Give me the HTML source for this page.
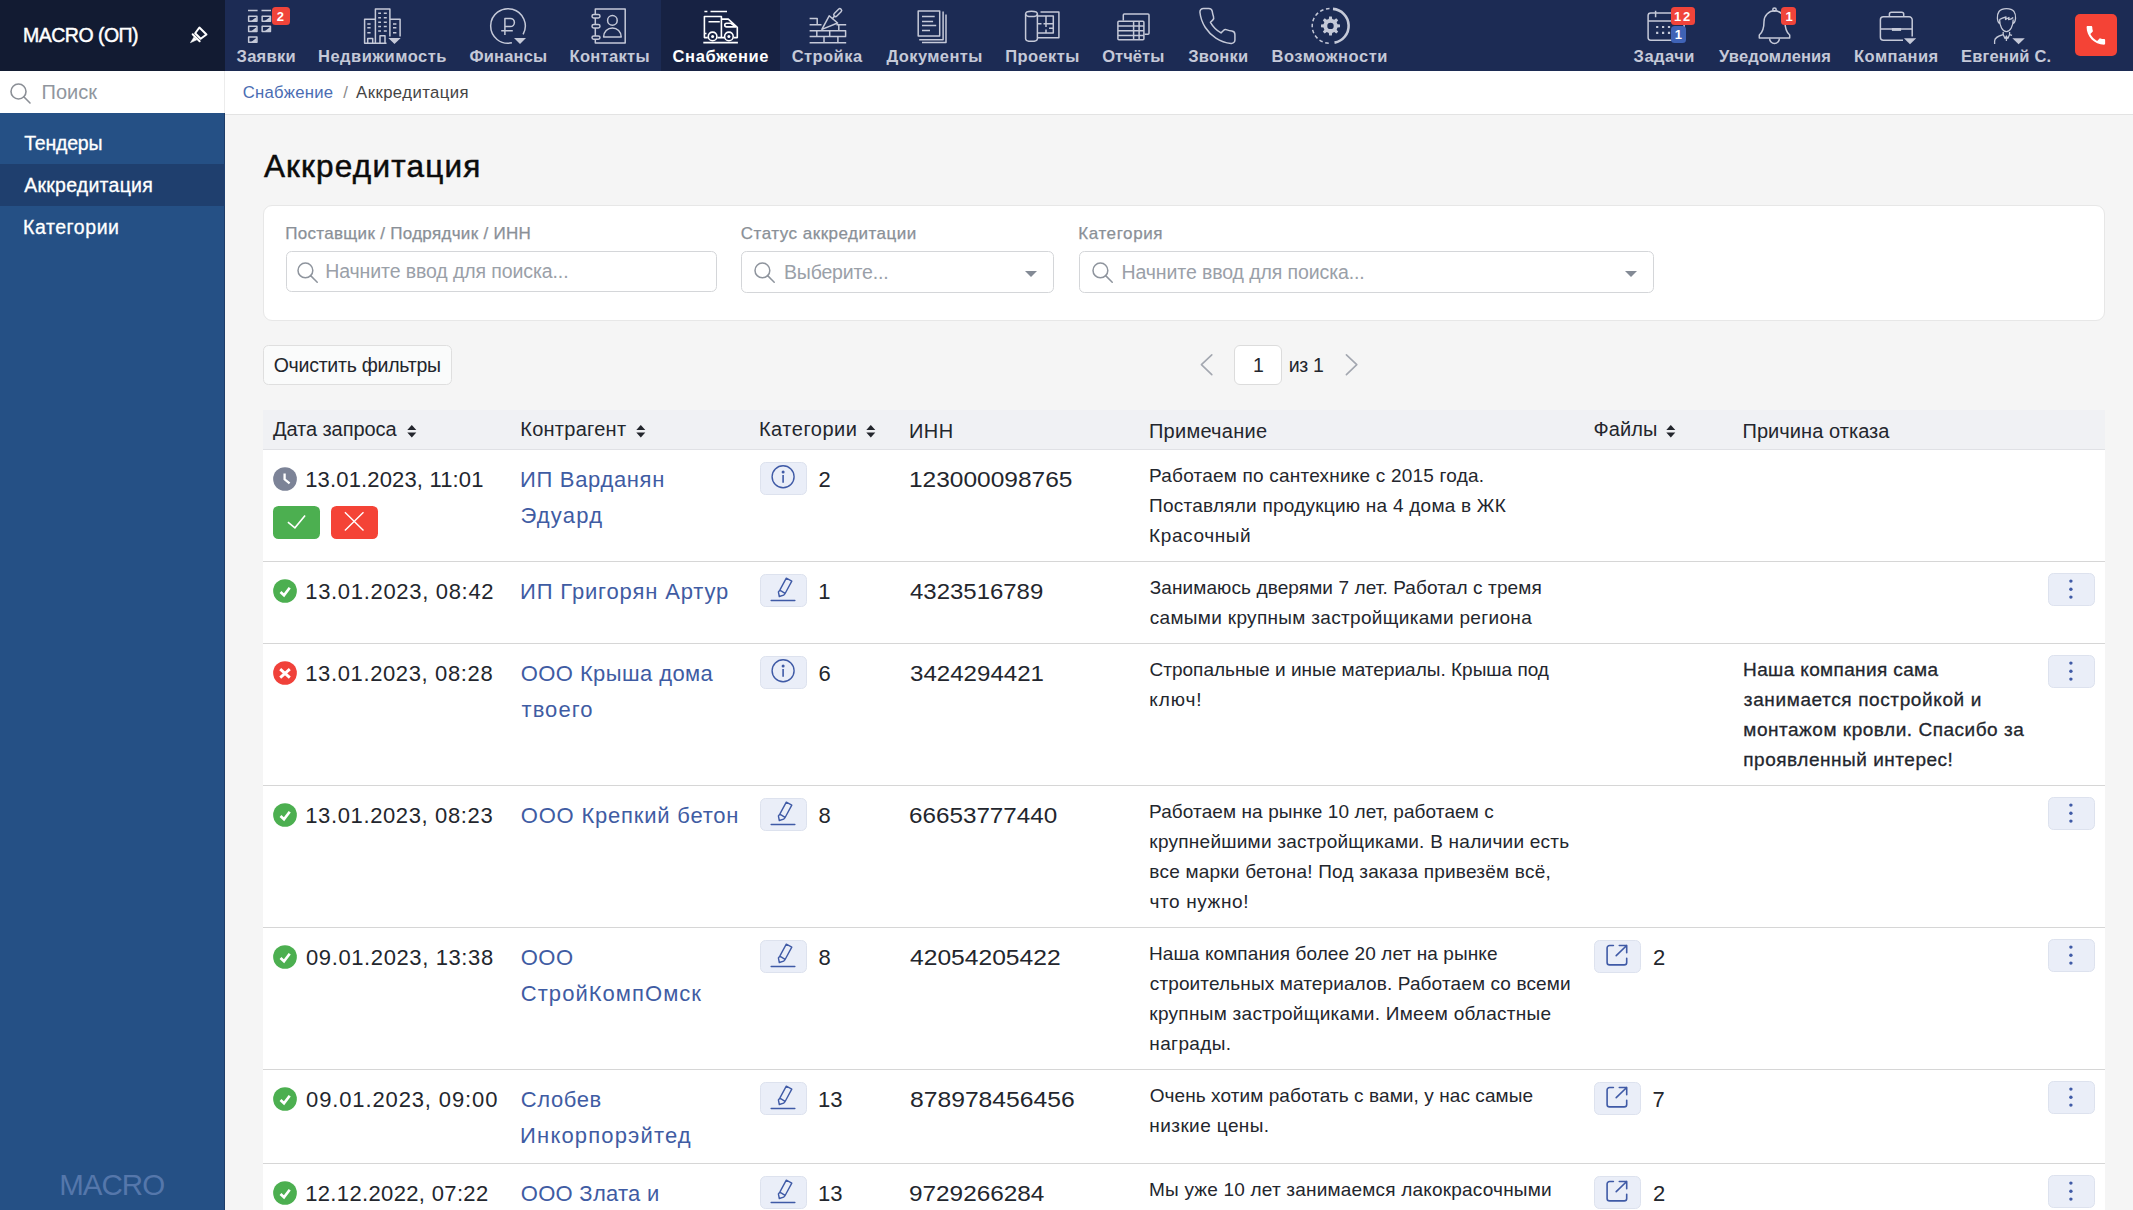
<!DOCTYPE html>
<html lang="ru">
<head>
<meta charset="utf-8">
<title>Аккредитация — Снабжение</title>
<style>
*{box-sizing:border-box;margin:0;padding:0}
html,body{width:2133px;height:1210px;overflow:hidden;background:#f5f5f5;font-family:"Liberation Sans",sans-serif;color:#23262d}
body{position:relative}
.abs{position:absolute}
.t{position:absolute;white-space:nowrap;display:block}
#top{position:absolute;left:0;top:0;width:2133px;height:70.5px;background:#1c2b54}
#brand{position:absolute;left:0;top:0;width:224.7px;height:70.5px;background:#121b32}
#navact{position:absolute;left:661px;top:0;width:119.2px;height:70.5px;background:#172243}
#callbtn{position:absolute;left:2075px;top:13.8px;width:42px;height:42.2px;border-radius:5px;background:#f44336}
.badge{position:absolute;background:#f0443a;border-radius:3.5px}
.badge.blue{background:#3f63b6}
#search{position:absolute;left:0;top:70.5px;width:224.7px;height:42.7px;background:#fff}
#crumb{position:absolute;left:223.8px;top:70.5px;width:1909.2px;height:44px;background:#fff;border-bottom:1px solid #e3e3e3;border-left:1px solid #ececec}
#side{position:absolute;left:0;top:113.2px;width:224.7px;height:1097px;background:#255085;border-right:1px solid #1d3c68}
#side .it{position:absolute;left:0;width:224.7px;height:42.2px}
#side .it.on{background:#1f3f6e}
#filters{position:absolute;left:263.3px;top:205px;width:1842px;height:115.6px;background:#fff;border:1px solid #e7e7e7;border-radius:9px}
.finput{position:absolute;background:#fff;border:1px solid #d4d6d9;border-radius:5.5px}
.car{position:absolute;right:15.8px;top:18.5px;width:0;height:0;border-left:6px solid transparent;border-right:6px solid transparent;border-top:6.2px solid #838a95}
#clear{position:absolute;left:263.3px;top:345.2px;width:188.6px;height:40.3px;border:1px solid #dfdfdf;border-radius:5.5px;background:#fafbfb}
#pagebox{position:absolute;left:1234.4px;top:345.2px;width:47.4px;height:40.3px;border:1px solid #dcdcdc;border-radius:6px;background:#fff}
#tbl{position:absolute;left:263px;top:410px;width:1842px;height:800px;background:#fff}
#thead{position:absolute;left:263px;top:410px;width:1842px;height:40px;background:#f0f1f4;border-bottom:1px solid #e0e1e5}
.rl{position:absolute;left:263px;width:1842px;height:1px;background:#d6d6d6}
.btn{position:absolute;width:46.4px;height:32.6px;background:#eaeef8;border:1px solid #dde2ee;border-radius:5.5px}
.ab{position:absolute;width:46.6px;height:33px;border-radius:5.5px;overflow:hidden}
</style>
</head>
<body>
<div id="top"><div id="brand"></div><div id="navact"></div>
<div id="callbtn"></div>
</div>
<div id="search"></div><div id="crumb"></div>
<svg class="abs" style="left:9.1px;top:82.0px" width="27" height="27"><g transform="translate(-9.1 -82.0)" fill="none" stroke="#8b8f96" stroke-width="1.6" stroke-linecap="round"><circle cx="18.6" cy="91.5" r="7.5"/><path d="M23.90 96.80L30.10 103.00"/></g></svg>
<div id="side"><div class="it on" style="top:51px"></div></div>
<div id="filters"></div>
<div class="finput" style="left:286px;top:251.2px;width:431px;height:40.8px"></div>
<div class="finput" style="left:741.3px;top:251px;width:312.7px;height:41.6px"><i class="car"></i></div>
<div class="finput" style="left:1078.5px;top:251px;width:575.5px;height:41.6px"><i class="car"></i></div>
<svg class="abs" style="left:296.4px;top:261.3px" width="27" height="27"><g transform="translate(-296.4 -261.3)" fill="none" stroke="#8e949d" stroke-width="1.5" stroke-linecap="round"><circle cx="305.8" cy="270.7" r="7.4"/><path d="M311.03 275.93L317.63 282.53"/></g></svg>
<svg class="abs" style="left:753.2px;top:260.6px" width="27" height="27"><g transform="translate(-753.2 -260.6)" fill="none" stroke="#8e949d" stroke-width="1.5" stroke-linecap="round"><circle cx="762.6" cy="270.0" r="7.4"/><path d="M767.83 275.23L774.43 281.83"/></g></svg>
<svg class="abs" style="left:1091.0px;top:260.6px" width="27" height="27"><g transform="translate(-1091.0 -260.6)" fill="none" stroke="#8e949d" stroke-width="1.5" stroke-linecap="round"><circle cx="1100.4" cy="270.0" r="7.4"/><path d="M1105.63 275.23L1112.23 281.83"/></g></svg>
<div id="clear"></div>
<div id="pagebox"></div>
<svg class="abs" style="left:1196px;top:350px" width="170" height="30"><g fill="none" stroke="#a3a7b0" stroke-width="1.6" stroke-linecap="round" stroke-linejoin="round"><path d="M15.8 4.8L5.4 14.7L15.8 24.6"/><path d="M150.4 4.8L160.8 14.7L150.4 24.6"/></g></svg>
<div id="tbl"></div><div id="thead"></div>
<div class="rl" style="top:561px"></div>
<div class="rl" style="top:643px"></div>
<div class="rl" style="top:785px"></div>
<div class="rl" style="top:927px"></div>
<div class="rl" style="top:1069px"></div>
<div class="rl" style="top:1163px"></div>
<svg class="abs" style="left:407px;top:424.5px" width="10" height="13"><path d="M0.3 5L4.8 0L9.3 5Z M0.3 7.6L4.8 12.6L9.3 7.6Z" fill="#23262d"/></svg>
<svg class="abs" style="left:636px;top:424.5px" width="10" height="13"><path d="M0.3 5L4.8 0L9.3 5Z M0.3 7.6L4.8 12.6L9.3 7.6Z" fill="#23262d"/></svg>
<svg class="abs" style="left:866px;top:424.5px" width="10" height="13"><path d="M0.3 5L4.8 0L9.3 5Z M0.3 7.6L4.8 12.6L9.3 7.6Z" fill="#23262d"/></svg>
<svg class="abs" style="left:1666px;top:424.5px" width="10" height="13"><path d="M0.3 5L4.8 0L9.3 5Z M0.3 7.6L4.8 12.6L9.3 7.6Z" fill="#23262d"/></svg>
<svg class="abs" style="left:273.1px;top:467px" width="24" height="24"><circle cx="12" cy="12" r="11.85" fill="#7c8397"/><path d="M11.6 6.6V12.3L16.6 16.4" fill="none" stroke="#fff" stroke-width="2.3"/></svg>
<div class="btn" style="left:760.3px;top:462.2px"><svg width="46" height="32" style="position:absolute;left:-1px;top:-1px;overflow:visible"><circle cx="23.1" cy="14.8" r="11" fill="none" stroke="#3f5aa6" stroke-width="1.4"/><circle cx="23.1" cy="10.1" r="1.5" fill="#3f5aa6"/><path d="M23.1 13.1V20.7" stroke="#3f5aa6" stroke-width="1.6"/></svg></div>
<svg class="abs" style="left:273.1px;top:579px" width="24" height="24"><circle cx="12" cy="12" r="11.85" fill="#4caf50"/><path d="M7.5 12.9L11 16.2L16.7 8.8" fill="none" stroke="#fff" stroke-width="2.7"/></svg>
<div class="btn" style="left:760.3px;top:574.2px"><svg width="46" height="32" style="position:absolute;left:-1px;top:-1px;overflow:visible"><path d="M26.3 4.2L31.8 7.1L25.1 19.5L23.7 21.1L19.3 22.5L18.4 17.9L19.8 16.2Z M19.8 16.2L25.1 19.3" fill="none" stroke="#3f5aa6" stroke-width="1.4" stroke-linejoin="round"/><path d="M11.2 26.5H34.8" stroke="#3f5aa6" stroke-width="1.5" stroke-linecap="round"/></svg></div>
<div class="btn" style="left:2048.4px;top:573.4px"><svg width="46" height="32" style="position:absolute;left:-1px;top:-1px;overflow:visible"><circle cx="22.9" cy="8.1" r="1.7" fill="#3f5aa6"/><circle cx="22.9" cy="16.2" r="1.7" fill="#3f5aa6"/><circle cx="22.9" cy="24.1" r="1.7" fill="#3f5aa6"/></svg></div>
<svg class="abs" style="left:273.1px;top:661px" width="24" height="24"><circle cx="12" cy="12" r="11.85" fill="#f0413a"/><path d="M7.2 8.2L16.8 16.6M16.8 8.2L7.2 16.6" fill="none" stroke="#fff" stroke-width="2.9"/></svg>
<div class="btn" style="left:760.3px;top:656.2px"><svg width="46" height="32" style="position:absolute;left:-1px;top:-1px;overflow:visible"><circle cx="23.1" cy="14.8" r="11" fill="none" stroke="#3f5aa6" stroke-width="1.4"/><circle cx="23.1" cy="10.1" r="1.5" fill="#3f5aa6"/><path d="M23.1 13.1V20.7" stroke="#3f5aa6" stroke-width="1.6"/></svg></div>
<div class="btn" style="left:2048.4px;top:655.4px"><svg width="46" height="32" style="position:absolute;left:-1px;top:-1px;overflow:visible"><circle cx="22.9" cy="8.1" r="1.7" fill="#3f5aa6"/><circle cx="22.9" cy="16.2" r="1.7" fill="#3f5aa6"/><circle cx="22.9" cy="24.1" r="1.7" fill="#3f5aa6"/></svg></div>
<svg class="abs" style="left:273.1px;top:803px" width="24" height="24"><circle cx="12" cy="12" r="11.85" fill="#4caf50"/><path d="M7.5 12.9L11 16.2L16.7 8.8" fill="none" stroke="#fff" stroke-width="2.7"/></svg>
<div class="btn" style="left:760.3px;top:798.2px"><svg width="46" height="32" style="position:absolute;left:-1px;top:-1px;overflow:visible"><path d="M26.3 4.2L31.8 7.1L25.1 19.5L23.7 21.1L19.3 22.5L18.4 17.9L19.8 16.2Z M19.8 16.2L25.1 19.3" fill="none" stroke="#3f5aa6" stroke-width="1.4" stroke-linejoin="round"/><path d="M11.2 26.5H34.8" stroke="#3f5aa6" stroke-width="1.5" stroke-linecap="round"/></svg></div>
<div class="btn" style="left:2048.4px;top:797.4px"><svg width="46" height="32" style="position:absolute;left:-1px;top:-1px;overflow:visible"><circle cx="22.9" cy="8.1" r="1.7" fill="#3f5aa6"/><circle cx="22.9" cy="16.2" r="1.7" fill="#3f5aa6"/><circle cx="22.9" cy="24.1" r="1.7" fill="#3f5aa6"/></svg></div>
<svg class="abs" style="left:273.1px;top:945px" width="24" height="24"><circle cx="12" cy="12" r="11.85" fill="#4caf50"/><path d="M7.5 12.9L11 16.2L16.7 8.8" fill="none" stroke="#fff" stroke-width="2.7"/></svg>
<div class="btn" style="left:760.3px;top:940.2px"><svg width="46" height="32" style="position:absolute;left:-1px;top:-1px;overflow:visible"><path d="M26.3 4.2L31.8 7.1L25.1 19.5L23.7 21.1L19.3 22.5L18.4 17.9L19.8 16.2Z M19.8 16.2L25.1 19.3" fill="none" stroke="#3f5aa6" stroke-width="1.4" stroke-linejoin="round"/><path d="M11.2 26.5H34.8" stroke="#3f5aa6" stroke-width="1.5" stroke-linecap="round"/></svg></div>
<div class="btn" style="left:1594.2px;top:940.2px"><svg width="46" height="32" style="position:absolute;left:-1px;top:-1px;overflow:visible"><path d="M19.4 5.5H15.6A2.5 2.5 0 0 0 13.1 8V22.4A2.5 2.5 0 0 0 15.6 24.9H30.2A2.5 2.5 0 0 0 32.7 22.4V18.2M25.3 5.5H32.7V12.7M32.7 5.5L22.2 15.6" fill="none" stroke="#3f5aa6" stroke-width="1.6" stroke-linecap="round" stroke-linejoin="round"/></svg></div>
<div class="btn" style="left:2048.4px;top:939.4px"><svg width="46" height="32" style="position:absolute;left:-1px;top:-1px;overflow:visible"><circle cx="22.9" cy="8.1" r="1.7" fill="#3f5aa6"/><circle cx="22.9" cy="16.2" r="1.7" fill="#3f5aa6"/><circle cx="22.9" cy="24.1" r="1.7" fill="#3f5aa6"/></svg></div>
<svg class="abs" style="left:273.1px;top:1087px" width="24" height="24"><circle cx="12" cy="12" r="11.85" fill="#4caf50"/><path d="M7.5 12.9L11 16.2L16.7 8.8" fill="none" stroke="#fff" stroke-width="2.7"/></svg>
<div class="btn" style="left:760.3px;top:1082.2px"><svg width="46" height="32" style="position:absolute;left:-1px;top:-1px;overflow:visible"><path d="M26.3 4.2L31.8 7.1L25.1 19.5L23.7 21.1L19.3 22.5L18.4 17.9L19.8 16.2Z M19.8 16.2L25.1 19.3" fill="none" stroke="#3f5aa6" stroke-width="1.4" stroke-linejoin="round"/><path d="M11.2 26.5H34.8" stroke="#3f5aa6" stroke-width="1.5" stroke-linecap="round"/></svg></div>
<div class="btn" style="left:1594.2px;top:1082.2px"><svg width="46" height="32" style="position:absolute;left:-1px;top:-1px;overflow:visible"><path d="M19.4 5.5H15.6A2.5 2.5 0 0 0 13.1 8V22.4A2.5 2.5 0 0 0 15.6 24.9H30.2A2.5 2.5 0 0 0 32.7 22.4V18.2M25.3 5.5H32.7V12.7M32.7 5.5L22.2 15.6" fill="none" stroke="#3f5aa6" stroke-width="1.6" stroke-linecap="round" stroke-linejoin="round"/></svg></div>
<div class="btn" style="left:2048.4px;top:1081.4px"><svg width="46" height="32" style="position:absolute;left:-1px;top:-1px;overflow:visible"><circle cx="22.9" cy="8.1" r="1.7" fill="#3f5aa6"/><circle cx="22.9" cy="16.2" r="1.7" fill="#3f5aa6"/><circle cx="22.9" cy="24.1" r="1.7" fill="#3f5aa6"/></svg></div>
<svg class="abs" style="left:273.1px;top:1181px" width="24" height="24"><circle cx="12" cy="12" r="11.85" fill="#4caf50"/><path d="M7.5 12.9L11 16.2L16.7 8.8" fill="none" stroke="#fff" stroke-width="2.7"/></svg>
<div class="btn" style="left:760.3px;top:1176.2px"><svg width="46" height="32" style="position:absolute;left:-1px;top:-1px;overflow:visible"><path d="M26.3 4.2L31.8 7.1L25.1 19.5L23.7 21.1L19.3 22.5L18.4 17.9L19.8 16.2Z M19.8 16.2L25.1 19.3" fill="none" stroke="#3f5aa6" stroke-width="1.4" stroke-linejoin="round"/><path d="M11.2 26.5H34.8" stroke="#3f5aa6" stroke-width="1.5" stroke-linecap="round"/></svg></div>
<div class="btn" style="left:1594.2px;top:1176.2px"><svg width="46" height="32" style="position:absolute;left:-1px;top:-1px;overflow:visible"><path d="M19.4 5.5H15.6A2.5 2.5 0 0 0 13.1 8V22.4A2.5 2.5 0 0 0 15.6 24.9H30.2A2.5 2.5 0 0 0 32.7 22.4V18.2M25.3 5.5H32.7V12.7M32.7 5.5L22.2 15.6" fill="none" stroke="#3f5aa6" stroke-width="1.6" stroke-linecap="round" stroke-linejoin="round"/></svg></div>
<div class="btn" style="left:2048.4px;top:1175.4px"><svg width="46" height="32" style="position:absolute;left:-1px;top:-1px;overflow:visible"><circle cx="22.9" cy="8.1" r="1.7" fill="#3f5aa6"/><circle cx="22.9" cy="16.2" r="1.7" fill="#3f5aa6"/><circle cx="22.9" cy="24.1" r="1.7" fill="#3f5aa6"/></svg></div>
<div class="ab" style="left:273.3px;top:506px;background:#4caf50"><svg width="47" height="33"><path d="M14.9 16.2L21.9 21.8L32.1 9.5" fill="none" stroke="#fff" stroke-width="1.6"/></svg></div>
<div class="ab" style="left:331.2px;top:506px;background:#f44336"><svg width="47" height="33"><path d="M13.9 6.3L32.5 24.6M32.5 6.3L13.9 24.6" fill="none" stroke="#fff" stroke-width="1.4"/></svg></div>
<svg id="icons" width="2133" height="71" viewBox="0 0 2133 71" style="position:absolute;left:0;top:0">
<g fill="none" stroke="#c5c9d8" stroke-width="1.5" stroke-linejoin="round">
<path d="M248 10.6H257.6M261.5 10.6H271"/>
<rect x="248.65" y="16.15" width="8.3" height="5.2"/>
<path d="M256.6 16.9V21.1H251.2Z" fill="#c5c9d8" stroke="none"/>
<rect x="262.15" y="16.15" width="8.3" height="5.2"/>
<path d="M270.1 16.9V21.1H264.7Z" fill="#c5c9d8" stroke="none"/>
<rect x="248.65" y="26.25" width="8.3" height="5.2"/>
<path d="M256.6 27.0V31.200000000000003H251.2Z" fill="#c5c9d8" stroke="none"/>
<rect x="262.15" y="26.25" width="8.3" height="5.2"/>
<path d="M270.1 27.0V31.200000000000003H264.7Z" fill="#c5c9d8" stroke="none"/>
<rect x="248.65" y="36.949999999999996" width="8.3" height="5.2"/>
<path d="M256.6 37.699999999999996V41.9H251.2Z" fill="#c5c9d8" stroke="none"/>
<path d="M375.4 43.2V8.9H389.9V36.5M375.4 19.2H364.6V43.2H386.5M389.9 19.2H400.1V36.5"/>
<path d="M378.2 13.2H381M383.8 13.2H386.8M378.2 17.7H381M383.8 17.7H386.8M378.2 22.2H381M383.8 22.2H386.8M378.2 26.6H381M383.8 26.6H386.8M378.2 30.9H381M383.8 30.9H386.8M367.3 23.9H370.6M393 23.9H396.4M367.3 27.8H370.6M393 27.8H396.4M367.3 32.8H370.6M393 32.8H396.4" stroke-width="1.5"/>
<path d="M367.7 43V38.6H372.7V43M380 43V35.8H385V43"/>
<path d="M388.3 38H400.7L394.5 43.9Z" fill="#c5c9d8" stroke="none"/>
<path d="M511.9 42.85A17.3 17.3 0 1 1 523.1 34.4"/>
<path d="M514 38H526L520 43.9Z" fill="#c5c9d8" stroke="none"/>
<path d="M504.9 35V18.4H510.3A4.1 4.1 0 0 1 510.3 26.6H504.9M501.2 30.7H512.8" stroke-width="1.5"/>
<rect x="595.3" y="9.1" width="29.9" height="33.8"/>
<rect x="592" y="14.600000000000001" width="8" height="3.4" rx="1.7" fill="#1c2b54"/>
<rect x="592" y="24.6" width="8" height="3.4" rx="1.7" fill="#1c2b54"/>
<rect x="592" y="35.9" width="8" height="3.4" rx="1.7" fill="#1c2b54"/>
<circle cx="612.4" cy="20.4" r="4.8"/><path d="M603.6 36.9A8.8 9 0 0 1 621.2 36.9Z"/>
<path d="M809.6 18.6H817.2V24.8M809.6 24.8H821.5M836.5 24.8H846.2M809.6 30.7H846.2M809.6 36.6H846.2M809.6 42.8H846.2M816.8 30.7V36.6M829.7 30.7V36.6M845.6 30.7V36.6M824 36.6V42.8M837.9 36.6V42.8M838.8 24.8V30.7"/>
<path d="M829.2 15.8L821.9 29.4L837.6 23Z M832 19.2L834.6 16"/>
<rect x="832.9" y="10.8" width="9.6" height="3.6" rx="1.8" transform="rotate(-45 837.7 12.6)"/>
<rect x="918.2" y="10.9" width="21.5" height="25.1"/>
<path d="M922 16.5H934.7M922 21.5H933.1M922 25.4H936.2M922 30.5H930M943.1 11.6V39.7H919.2M946 14.4V42.5H922"/>
<ellipse cx="1031.5" cy="13.9" rx="5.9" ry="2.6"/>
<path d="M1025.6 13.9V38.7A5.9 2.6 0 0 0 1037.4 38.7V13.9M1040.5 11.9H1058.9V37.8H1037.4"/>
<path d="M1037.4 16H1053.3V33H1037.4M1046 16V23.5M1037.4 23.8H1041.5M1043.5 23.8H1053.3M1046 23.8V27M1046 29.5V33M1049 28.3H1053.3"/>
<path d="M1123.3 20.6V15A1 1 0 0 1 1124.3 14H1148A1 1 0 0 1 1149 15V33.3A1 1 0 0 1 1148 34.3H1144.6"/>
<rect x="1117.9" y="21.2" width="26" height="18.6" rx="1"/>
<path d="M1117.9 25.9H1143.9M1117.9 30.8H1143.9M1117.9 35.6H1143.9M1133.6 21.2V39.8M1139.1 21.2V39.8"/>
<path transform="translate(1196.2 4.9) scale(1.76)" stroke-width="0.85" d="M22 16.92v3a2 2 0 0 1-2.18 2 19.79 19.79 0 0 1-8.63-3.07 19.5 19.5 0 0 1-6-6 19.79 19.79 0 0 1-3.07-8.67A2 2 0 0 1 4.11 2h3a2 2 0 0 1 2 1.72 12.84 12.84 0 0 0 .7 2.81 2 2 0 0 1-.45 2.11L8.09 9.91a16 16 0 0 0 6 6l1.27-1.27a2 2 0 0 1 2.11-.45 12.84 12.84 0 0 0 2.81.7A2 2 0 0 1 22 16.92z"/>
<path d="M1329.5 8.6A17.3 17.3 0 0 0 1329.5 43.2" stroke-dasharray="3.6 2.6"/>
<path d="M1333 8.9A17 17 0 0 1 1334.5 42.6" stroke-width="2.6"/>
<path d="M1337.50 24.22 L1340.00 24.55 L1340.00 27.25 L1337.50 27.58 L1336.64 29.66 L1338.18 31.66 L1336.26 33.58 L1334.26 32.04 L1332.18 32.90 L1331.85 35.40 L1329.15 35.40 L1328.82 32.90 L1326.74 32.04 L1324.74 33.58 L1322.82 31.66 L1324.36 29.66 L1323.50 27.58 L1321.00 27.25 L1321.00 24.55 L1323.50 24.22 L1324.36 22.14 L1322.82 20.14 L1324.74 18.22 L1326.74 19.76 L1328.82 18.90 L1329.15 16.40 L1331.85 16.40 L1332.18 18.90 L1334.26 19.76 L1336.26 18.22 L1338.18 20.14 L1336.64 22.14 Z M1333.70 25.90 A3.2 3.2 0 1 0 1327.30 25.90 A3.2 3.2 0 1 0 1333.70 25.90 Z" fill="#c5c9d8" stroke="none" fill-rule="evenodd"/>
<rect x="1648.1" y="13" width="36" height="27.2" rx="2.6"/>
<path d="M1648.1 21H1684M1655.6 10.8V17.3"/>
<path d="M1656.1000000000001 27H1658.3M1662.0 27H1664.1999999999998M1667.9 27H1670.1M1656.1000000000001 32.9H1658.3M1662.0 32.9H1664.1999999999998M1667.9 32.9H1670.1" stroke-width="2.1"/>
<path d="M1759.3 38V35C1763.2 32 1764 28 1764 21.5A10.5 10.7 0 0 1 1785 21.5C1785 28 1785.8 32 1789.7 35V38Z"/>
<path d="M1769.6 38.6A4.9 4.9 0 0 0 1779.4 38.6"/><circle cx="1774.5" cy="9.6" r="1.7"/>
<path d="M1903 40.3H1883.4a3 3 0 0 1-3-3V19.8a3 3 0 0 1 3-3H1909.2a3 3 0 0 1 3 3V36.5M1889.4 16.8V14.3a2 2 0 0 1 2-2H1901.7a2 2 0 0 1 2 2V16.8M1880.4 29.1H1912.2"/>
<rect x="1891.9" y="28" width="9.2" height="2.9" fill="#c5c9d8" stroke="none"/>
<path d="M1903.9 38.2H1916.2L1910 44.2Z" fill="#c5c9d8" stroke="none"/>
<path d="M1999.6 19.5C1999.6 26 2002.5 31.6 2006.4 31.6C2010.3 31.6 2013.2 26 2013.2 19.5M1999.6 23.5C1997 22 1996.5 15 1999 11.5C2002 7.6 2011 7.6 2014 11.5C2016.4 15 2016 22 2013.2 23.5M1999.6 19.5C2002 18 2004 17.5 2006 17L2005.5 19.5L2009 17.5L2008.6 19.6C2010.5 19.3 2012 18.8 2013.2 17.5" stroke-width="1.3"/>
<path d="M1994.6 44V41C1994.6 37.5 1998 36.2 2003.2 34.6V32M2009.6 32V34.6L2012 35.4M2003.2 34.6L2005 38.5L2006.4 36L2007.8 38.5L2009.6 34.6M2006.4 36V41" stroke-width="1.3"/>
<path d="M2012.4 38.2H2024.8L2018.6 44.2Z" fill="#c5c9d8" stroke="none"/>
</g>
<g fill="none" stroke="#fff" stroke-width="1.6" stroke-linejoin="round">
<path d="M704.4 11.5H707.4M710.5 11.5H727M707.8 37.6H704.4V16.5H721.4V37.6M708.5 21.7H719.8M721.4 19.1H728.3L737.3 27.3V37.6H733.6M717.4 37.6H724.2M703.3 42.6H737.9M704.4 33.5H706.5"/>
<path d="M726.6 23.2H730.6L735.6 26.9H726.6A1.85 1.85 0 0 1 726.6 23.2Z"/>
<circle cx="712.6" cy="36.4" r="4.3"/><circle cx="728.9" cy="36.4" r="4.3"/>
<circle cx="712.6" cy="36.4" r="1.5" fill="#fff" stroke="none"/><circle cx="728.9" cy="36.4" r="1.5" fill="#fff" stroke="none"/>
</g>
<g fill="none" stroke="#fff" stroke-width="2" stroke-linejoin="round" stroke-linecap="round">
<path d="M199.39 27.49L206.46 34.56L200.70 38.76L195.19 33.25Z"/>
<path d="M192.67 34.20L199.68 41.20"/>
<path d="M194.02 36.96L190.41 42.69L196.92 39.86Z" fill="#fff" stroke-width="0.5"/></g>
<path transform="translate(2083.5 23) scale(1.03)" fill="#fff" d="M6.62 10.79c1.44 2.83 3.76 5.14 6.59 6.59l2.2-2.2c.27-.27.67-.36 1.02-.24 1.12.37 2.33.57 3.57.57.55 0 1 .45 1 1V20c0 .55-.45 1-1 1-9.39 0-17-7.61-17-17 0-.55.45-1 1-1h3.5c.55 0 1 .45 1 1 0 1.25.2 2.45.57 3.57.11.35.03.74-.25 1.02l-2.2 2.2z"/>
</svg>
<div class="badge" style="left:272px;top:7px;width:18.3px;height:18px"></div>
<div class="badge" style="left:1670.5px;top:7.3px;width:24.5px;height:17.8px"></div>
<div class="badge blue" style="left:1670.5px;top:25.8px;width:15.4px;height:17.2px"></div>
<div class="badge" style="left:1781.2px;top:7.3px;width:14.9px;height:17.8px"></div>
<div id="texts">
<span class="t" style="left:23.10px;top:22px;font-size:19.5px;line-height:26px;color:#fff;letter-spacing:-0.530px;-webkit-text-stroke:0.45px #fff;">MACRO (ОП)</span>
<span class="t" style="left:236.57px;top:45px;font-size:16.5px;line-height:22px;font-weight:700;color:#c5c9d8;letter-spacing:0.262px;">Заявки</span>
<span class="t" style="left:318.00px;top:45px;font-size:16.5px;line-height:22px;font-weight:700;color:#c5c9d8;letter-spacing:0.494px;">Недвижимость</span>
<span class="t" style="left:469.48px;top:45px;font-size:16.5px;line-height:22px;font-weight:700;color:#c5c9d8;letter-spacing:0.167px;">Финансы</span>
<span class="t" style="left:569.50px;top:45px;font-size:16.5px;line-height:22px;font-weight:700;color:#c5c9d8;letter-spacing:0.320px;">Контакты</span>
<span class="t" style="left:791.67px;top:45px;font-size:16.5px;line-height:22px;font-weight:700;color:#c5c9d8;letter-spacing:0.452px;">Стройка</span>
<span class="t" style="left:886.50px;top:45px;font-size:16.5px;line-height:22px;font-weight:700;color:#c5c9d8;letter-spacing:0.382px;">Документы</span>
<span class="t" style="left:1005.20px;top:45px;font-size:16.5px;line-height:22px;font-weight:700;color:#c5c9d8;letter-spacing:0.419px;">Проекты</span>
<span class="t" style="left:1102.17px;top:45px;font-size:16.5px;line-height:22px;font-weight:700;color:#c5c9d8;letter-spacing:0.060px;">Отчёты</span>
<span class="t" style="left:1188.17px;top:45px;font-size:16.5px;line-height:22px;font-weight:700;color:#c5c9d8;letter-spacing:0.262px;">Звонки</span>
<span class="t" style="left:1271.40px;top:45px;font-size:16.5px;line-height:22px;font-weight:700;color:#c5c9d8;letter-spacing:0.573px;">Возможности</span>
<span class="t" style="left:1633.57px;top:45px;font-size:16.5px;line-height:22px;font-weight:700;color:#c5c9d8;letter-spacing:0.479px;">Задачи</span>
<span class="t" style="left:1719.04px;top:45px;font-size:16.5px;line-height:22px;font-weight:700;color:#c5c9d8;letter-spacing:0.151px;">Уведомления</span>
<span class="t" style="left:1854.10px;top:45px;font-size:16.5px;line-height:22px;font-weight:700;color:#c5c9d8;letter-spacing:0.430px;">Компания</span>
<span class="t" style="left:1961.00px;top:45px;font-size:16.5px;line-height:22px;font-weight:700;color:#c5c9d8;letter-spacing:0.168px;">Евгений С.</span>
<span class="t" style="left:672.57px;top:45px;font-size:16.5px;line-height:22px;font-weight:700;color:#fff;letter-spacing:0.622px;">Снабжение</span>
<span class="t" style="left:276.85px;top:8px;font-size:13px;line-height:17px;font-weight:700;color:#fff;">2</span>
<span class="t" style="left:1673.90px;top:8px;font-size:13px;line-height:17px;font-weight:700;color:#fff;letter-spacing:1.831px;">12</span>
<span class="t" style="left:1674.80px;top:26px;font-size:13px;line-height:17px;font-weight:700;color:#fff;">1</span>
<span class="t" style="left:1785.50px;top:8px;font-size:13px;line-height:17px;font-weight:700;color:#fff;">1</span>
<span class="t" style="left:41.54px;top:79px;font-size:20px;line-height:26px;color:#90969e;letter-spacing:0.037px;">Поиск</span>
<span class="t" style="left:242.72px;top:82px;font-size:16.7px;line-height:22px;color:#4a6db3;letter-spacing:0.271px;">Снабжение</span>
<span class="t" style="left:343.18px;top:82px;font-size:16.7px;line-height:22px;color:#8a8a8a;">/</span>
<span class="t" style="left:356.09px;top:82px;font-size:16.7px;line-height:22px;color:#444;letter-spacing:0.441px;">Аккредитация</span>
<span class="t" style="left:24.18px;top:130px;font-size:19.5px;line-height:26px;color:#fff;letter-spacing:-0.198px;-webkit-text-stroke:0.3px #fff;">Тендеры</span>
<span class="t" style="left:24.30px;top:172px;font-size:19.5px;line-height:26px;color:#fff;letter-spacing:0.242px;-webkit-text-stroke:0.3px #fff;">Аккредитация</span>
<span class="t" style="left:23.01px;top:214px;font-size:19.5px;line-height:26px;color:#fff;letter-spacing:0.563px;-webkit-text-stroke:0.3px #fff;">Категории</span>
<span class="t" style="left:59.19px;top:1165px;font-size:29.5px;line-height:39px;color:#5577ab;letter-spacing:-0.956px;">MACRO</span>
<span class="t" style="left:263.89px;top:146px;font-size:31.5px;line-height:41px;color:#0b0b0b;letter-spacing:1.210px;-webkit-text-stroke:0.5px #0b0b0b;">Аккредитация</span>
<span class="t" style="left:285.22px;top:222px;font-size:17px;line-height:23px;color:#8a9097;letter-spacing:0.306px;-webkit-text-stroke:0.25px #8a9097;">Поставщик / Подрядчик / ИНН</span>
<span class="t" style="left:740.85px;top:222px;font-size:17px;line-height:23px;color:#8a9097;letter-spacing:0.492px;-webkit-text-stroke:0.25px #8a9097;">Статус аккредитации</span>
<span class="t" style="left:1078.20px;top:222px;font-size:17px;line-height:23px;color:#8a9097;letter-spacing:0.610px;-webkit-text-stroke:0.25px #8a9097;">Категория</span>
<span class="t" style="left:325.28px;top:258px;font-size:19.5px;line-height:26px;color:#9aa0a8;letter-spacing:-0.101px;">Начните ввод для поиска...</span>
<span class="t" style="left:783.98px;top:259px;font-size:19.5px;line-height:26px;color:#9aa0a8;letter-spacing:-0.178px;">Выберите...</span>
<span class="t" style="left:1121.48px;top:259px;font-size:19.5px;line-height:26px;color:#9aa0a8;letter-spacing:-0.101px;">Начните ввод для поиска...</span>
<span class="t" style="left:273.66px;top:352px;font-size:19.5px;line-height:26px;letter-spacing:-0.242px;">Очистить фильтры</span>
<span class="t" style="left:1252.94px;top:352px;font-size:19.5px;line-height:26px;">1</span>
<span class="t" style="left:1288.77px;top:352px;font-size:19.5px;line-height:26px;letter-spacing:-0.299px;">из 1</span>
<span class="t" style="left:273.00px;top:416px;font-size:20px;line-height:26px;letter-spacing:-0.067px;">Дата запроса</span>
<span class="t" style="left:520.24px;top:416px;font-size:20px;line-height:26px;letter-spacing:0.267px;">Контрагент</span>
<span class="t" style="left:758.94px;top:416px;font-size:20px;line-height:26px;letter-spacing:0.515px;">Категории</span>
<span class="t" style="left:908.94px;top:418px;font-size:20px;line-height:26px;letter-spacing:0.525px;">ИНН</span>
<span class="t" style="left:1148.94px;top:418px;font-size:20px;line-height:26px;letter-spacing:0.258px;">Примечание</span>
<span class="t" style="left:1593.48px;top:416px;font-size:20px;line-height:26px;letter-spacing:0.115px;">Файлы</span>
<span class="t" style="left:1742.44px;top:418px;font-size:20px;line-height:26px;letter-spacing:0.064px;">Причина отказа</span>
<span class="t" style="left:305.21px;top:465px;font-size:22px;line-height:29px;letter-spacing:0.155px;">13.01.2023, 11:01</span>
<span class="t" style="left:520.10px;top:465px;font-size:22px;line-height:29px;color:#3f5ca3;letter-spacing:0.656px;">ИП Варданян</span>
<span class="t" style="left:520.47px;top:501px;font-size:22px;line-height:29px;color:#3f5ca3;letter-spacing:1.240px;">Эдуард</span>
<span class="t" style="left:818.50px;top:465px;font-size:22px;line-height:29px;">2</span>
<span class="t" style="left:908.72px;top:465px;font-size:22px;line-height:29px;transform:scaleX(1.1131);transform-origin:0 0;">123000098765</span>
<span class="t" style="left:1149.03px;top:463px;font-size:19px;line-height:25px;letter-spacing:0.212px;">Работаем по сантехнике с 2015 года.</span>
<span class="t" style="left:1149.05px;top:493px;font-size:19px;line-height:25px;letter-spacing:0.242px;">Поставляли продукцию на 4 дома в ЖК</span>
<span class="t" style="left:1149.03px;top:523px;font-size:19px;line-height:25px;letter-spacing:0.616px;">Красочный</span>
<span class="t" style="left:305.21px;top:577px;font-size:22px;line-height:29px;letter-spacing:0.687px;">13.01.2023, 08:42</span>
<span class="t" style="left:520.10px;top:577px;font-size:22px;line-height:29px;color:#3f5ca3;letter-spacing:0.847px;">ИП Григорян Артур</span>
<span class="t" style="left:818.21px;top:577px;font-size:22px;line-height:29px;">1</span>
<span class="t" style="left:910.05px;top:577px;font-size:22px;line-height:29px;transform:scaleX(1.0892);transform-origin:0 0;">4323516789</span>
<span class="t" style="left:1149.71px;top:575px;font-size:19px;line-height:25px;letter-spacing:0.105px;">Занимаюсь дверями 7 лет. Работал с тремя</span>
<span class="t" style="left:1149.77px;top:605px;font-size:19px;line-height:25px;letter-spacing:0.321px;">самыми крупным застройщиками региона</span>
<span class="t" style="left:305.21px;top:659px;font-size:22px;line-height:29px;letter-spacing:0.629px;">13.01.2023, 08:28</span>
<span class="t" style="left:520.80px;top:659px;font-size:22px;line-height:29px;color:#3f5ca3;letter-spacing:0.408px;">ООО Крыша дома</span>
<span class="t" style="left:521.56px;top:695px;font-size:22px;line-height:29px;color:#3f5ca3;letter-spacing:1.027px;">твоего</span>
<span class="t" style="left:818.50px;top:659px;font-size:22px;line-height:29px;">6</span>
<span class="t" style="left:909.50px;top:659px;font-size:22px;line-height:29px;transform:scaleX(1.0949);transform-origin:0 0;">3424294421</span>
<span class="t" style="left:1149.50px;top:657px;font-size:19px;line-height:25px;letter-spacing:0.009px;">Стропальные и иные материалы. Крыша под</span>
<span class="t" style="left:1149.35px;top:687px;font-size:19px;line-height:25px;letter-spacing:0.875px;">ключ!</span>
<span class="t" style="left:1743.05px;top:657px;font-size:19px;line-height:25px;letter-spacing:0.368px;-webkit-text-stroke:0.3px #23262d;">Наша компания сама</span>
<span class="t" style="left:1743.85px;top:687px;font-size:19px;line-height:25px;letter-spacing:0.618px;-webkit-text-stroke:0.3px #23262d;">занимается постройкой и</span>
<span class="t" style="left:1743.30px;top:717px;font-size:19px;line-height:25px;letter-spacing:0.525px;-webkit-text-stroke:0.3px #23262d;">монтажом кровли. Спасибо за</span>
<span class="t" style="left:1743.30px;top:747px;font-size:19px;line-height:25px;letter-spacing:0.524px;-webkit-text-stroke:0.3px #23262d;">проявленный интерес!</span>
<span class="t" style="left:305.21px;top:801px;font-size:22px;line-height:29px;letter-spacing:0.629px;">13.01.2023, 08:23</span>
<span class="t" style="left:520.80px;top:801px;font-size:22px;line-height:29px;color:#3f5ca3;letter-spacing:0.792px;">ООО Крепкий бетон</span>
<span class="t" style="left:818.50px;top:801px;font-size:22px;line-height:29px;">8</span>
<span class="t" style="left:909.38px;top:801px;font-size:22px;line-height:29px;transform:scaleX(1.1014);transform-origin:0 0;">66653777440</span>
<span class="t" style="left:1149.03px;top:799px;font-size:19px;line-height:25px;letter-spacing:0.100px;">Работаем на рынке 10 лет, работаем с</span>
<span class="t" style="left:1149.35px;top:829px;font-size:19px;line-height:25px;letter-spacing:0.254px;">крупнейшими застройщиками. В наличии есть</span>
<span class="t" style="left:1149.34px;top:859px;font-size:19px;line-height:25px;letter-spacing:0.221px;">все марки бетона! Под заказа привезём всё,</span>
<span class="t" style="left:1149.50px;top:889px;font-size:19px;line-height:25px;letter-spacing:0.610px;">что нужно!</span>
<span class="t" style="left:306.02px;top:943px;font-size:22px;line-height:29px;letter-spacing:0.608px;">09.01.2023, 13:38</span>
<span class="t" style="left:520.80px;top:943px;font-size:22px;line-height:29px;color:#3f5ca3;letter-spacing:0.440px;">ООО</span>
<span class="t" style="left:520.80px;top:979px;font-size:22px;line-height:29px;color:#3f5ca3;letter-spacing:1.043px;">СтройКомпОмск</span>
<span class="t" style="left:818.50px;top:943px;font-size:22px;line-height:29px;">8</span>
<span class="t" style="left:910.03px;top:943px;font-size:22px;line-height:29px;transform:scaleX(1.1191);transform-origin:0 0;">42054205422</span>
<span class="t" style="left:1149.03px;top:941px;font-size:19px;line-height:25px;letter-spacing:0.098px;">Наша компания более 20 лет на рынке</span>
<span class="t" style="left:1149.77px;top:971px;font-size:19px;line-height:25px;letter-spacing:0.126px;">строительных материалов. Работаем со всеми</span>
<span class="t" style="left:1149.35px;top:1001px;font-size:19px;line-height:25px;letter-spacing:0.282px;">крупным застройщиками. Имеем областные</span>
<span class="t" style="left:1149.34px;top:1031px;font-size:19px;line-height:25px;letter-spacing:0.368px;">награды.</span>
<span class="t" style="left:1652.90px;top:943px;font-size:22px;line-height:29px;">2</span>
<span class="t" style="left:306.02px;top:1085px;font-size:22px;line-height:29px;letter-spacing:0.875px;">09.01.2023, 09:00</span>
<span class="t" style="left:520.80px;top:1085px;font-size:22px;line-height:29px;color:#3f5ca3;letter-spacing:0.603px;">Слобев</span>
<span class="t" style="left:520.10px;top:1121px;font-size:22px;line-height:29px;color:#3f5ca3;letter-spacing:1.161px;">Инкорпорэйтед</span>
<span class="t" style="left:818.21px;top:1085px;font-size:22px;line-height:29px;transform:scaleX(1.0029);transform-origin:0 0;">13</span>
<span class="t" style="left:909.50px;top:1085px;font-size:22px;line-height:29px;transform:scaleX(1.1216);transform-origin:0 0;">878978456456</span>
<span class="t" style="left:1149.69px;top:1083px;font-size:19px;line-height:25px;letter-spacing:0.083px;">Очень хотим работать с вами, у нас самые</span>
<span class="t" style="left:1149.34px;top:1113px;font-size:19px;line-height:25px;letter-spacing:0.412px;">низкие цены.</span>
<span class="t" style="left:1652.60px;top:1085px;font-size:22px;line-height:29px;">7</span>
<span class="t" style="left:305.21px;top:1179px;font-size:22px;line-height:29px;letter-spacing:0.349px;">12.12.2022, 07:22</span>
<span class="t" style="left:520.80px;top:1179px;font-size:22px;line-height:29px;color:#3f5ca3;letter-spacing:0.270px;">ООО Злата и</span>
<span class="t" style="left:818.21px;top:1179px;font-size:22px;line-height:29px;transform:scaleX(1.0029);transform-origin:0 0;">13</span>
<span class="t" style="left:909.48px;top:1179px;font-size:22px;line-height:29px;transform:scaleX(1.1061);transform-origin:0 0;">9729266284</span>
<span class="t" style="left:1149.03px;top:1177px;font-size:19px;line-height:25px;letter-spacing:0.201px;">Мы уже 10 лет занимаемся лакокрасочными</span>
<span class="t" style="left:1652.90px;top:1179px;font-size:22px;line-height:29px;">2</span>
</div>
</body>
</html>
